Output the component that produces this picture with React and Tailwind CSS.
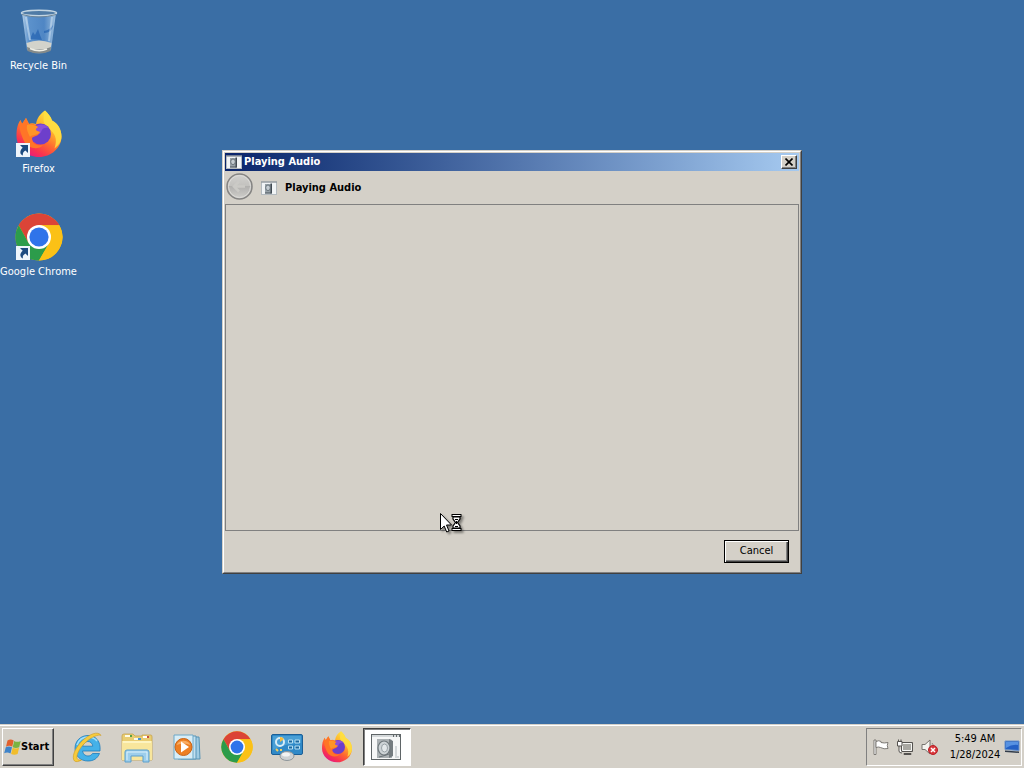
import React from 'react';

function ShortcutArrow() {
  return (
    <g>
      <rect x="1" y="33" width="14" height="14" fill="#eef4fb" />
      <path d="M5 35h8v8l-2.600-2.600c-2.200 1.400-3 3-2.400 5.200C4.600 44.500 4.400 40.500 7.700 37.700z" fill="#1c4a80" />
    </g>
  );
}

function RecycleBinIcon() {
  return (
    <svg viewBox="0 0 48 48" className="size-12" aria-hidden="true">
      <defs>
        <linearGradient id="bin" x1="0" x2="1">
          <stop offset="0" stopColor="#b4cfe8" />
          <stop offset=".2" stopColor="#5c92cc" />
          <stop offset=".65" stopColor="#4f86c4" />
          <stop offset="1" stopColor="#9fc1e0" />
        </linearGradient>
      </defs>
      <path d="M7 6 12 43q12 7 24 0L41 6z" fill="url(#bin)" />
      <path d="M11.500 36q12.500-5 25 0l-1 6q-12 6-23 0z" fill="#d3d3cb" />
      <path d="M12 40q12 5 24 0l-.5 4q-11.500 5-23 0z" fill="#848a8a" />
      <path d="M15 41.500q9 4 17 .5" stroke="#f0efe6" strokeWidth="1.500" fill="none" />
      <path d="m15 32 3-7 2 3 3-6 2 6 2 5zM29 24q6-1 9-6-1 8-9 8z" fill="#2462b0" opacity=".7" />
      <path d="M11 10l4 23" stroke="#e4f1fa" strokeWidth="2" opacity=".5" />
      <path d="M37 10l-3 24" stroke="#deedf8" strokeWidth="2" opacity=".45" />
      <ellipse cx="24" cy="6" rx="17.500" ry="2.800" fill="#4f7ba6" stroke="#c3d5e2" strokeWidth="1.500" />
      <path d="M7 7.500q17 5 34 0" stroke="#6d8597" strokeWidth="1" fill="none" />
    </svg>
  );
}

function FirefoxIcon({ id, className, shortcut }) {
  return (
    <svg viewBox="0 0 48 48" className={className} aria-hidden="true">
      <defs>
        <linearGradient id={id} x1=".85" y1=".05" x2=".25" y2="1">
          <stop offset="0" stopColor="#fff04a" />
          <stop offset=".33" stopColor="#ffb52a" />
          <stop offset=".58" stopColor="#ff6a30" />
          <stop offset=".8" stopColor="#f9344f" />
          <stop offset="1" stopColor="#e31587" />
        </linearGradient>
      </defs>
      <path d="M30 .5c3 3 6 6 7 10 6 3 9.500 9 9.500 16C46.500 38 36 47 24 47S1.500 38 1.500 26c0-7 1-12 4-16l1.500 4 4-6 3 6c2-1 4-1 7 0 1-6 4-10 9-13.500z" fill={`url(#${id})`} />
      <path d="M30 .5c3 3 6 6 7 10 6 3 9.500 9 9.500 16 0 5-3 9-7 12 2-6 2-11-1-15-3-5-10-7-10-14 0-3 .5-6 1.500-9z" fill="#ffdf42" opacity=".85" />
      <circle cx="25.500" cy="24" r="10.500" fill="#6d3fcb" />
      <path d="M16 20c4-6 13-8 18-2-4-1-7 0-8 4-2 4-7 2-10 3z" fill="#8c50d9" />
      <path d="M5.500 10l1.500 4 4-6 3 6c3-1 6 0 9 3-2 1-3 3-1 4l3 1c-1 4-6 4-8 6 0 6 5 8 11 7-5 6-16 3-19-4-3-7-6-14-3.500-21z" fill="#ff7527" />
      <path d="M12 15c4-1 8 0 11 2-2 1-3 3-1 4l3 1c-3 4-8 2-10 5-2-4-4-8-3-12z" fill="#ffa227" opacity=".7" />
      {shortcut && <ShortcutArrow />}
    </svg>
  );
}

function ChromeIcon({ className, shortcut }) {
  return (
    <svg viewBox="0 0 48 48" className={className} aria-hidden="true">
      <circle cx="24" cy="24" r="23.500" fill="#fbc116" />
      <path d="M24 24 13.600 30 3.700 12.200A23.500 23.500 0 0 1 44.300 12.200L24 12.300z" fill="#db4437" />
      <path d="M3.700 12.200A23.500 23.500 0 0 0 24 47.500L34.200 30 24 24l-10.400 6z" fill="#2c9c4b" />
      <path d="M44.300 12.200A23.500 23.500 0 0 1 24 47.500L34.200 30 24 12.200z" fill="#fbc116" />
      <circle cx="24" cy="24" r="12" fill="#fff" />
      <circle cx="24" cy="24" r="9.600" fill="#2f74ea" />
      {shortcut && <ShortcutArrow />}
    </svg>
  );
}

function AudioIcon({ className }) {
  return (
    <svg viewBox="0 0 30 26" className={className} aria-hidden="true">
      <rect x=".5" y=".5" width="29" height="25" fill="#f6f7f7" stroke="#5f6567" />
      <path d="M1 2h28" stroke="#d4d8da" strokeWidth="2" />
      <path d="M22 2h1M25 2h1M28 2h1" stroke="#41474a" strokeWidth="1.500" />
      <path d="M6 5h13l2 1v18H6z" fill="#aab0b3" />
      <path d="M18 5l4 2v15l-4 2z" fill="#757c80" />
      <ellipse cx="13" cy="14" rx="6" ry="7" fill="#cdd3d6" stroke="#6f787c" strokeWidth="1.200" />
      <ellipse cx="13.500" cy="14" rx="3" ry="4" fill="#e3e8ea" stroke="#9aa3a8" />
      <path d="M8 23q5-1 10-3" stroke="#687176" fill="none" />
      <path d="M25 12v11h3" stroke="#d4d8da" strokeWidth="2" fill="none" />
    </svg>
  );
}

function SmallAudioIcon() {
  return (
    <svg viewBox="0 0 16 14" className="h-[14px] w-4" aria-hidden="true">
      <rect x=".5" y="1" width="15" height="12.500" fill="#f1f4f6" stroke="#b3babf" />
      <path d="M0 1h16" stroke="#878e94" />
      <path d="M4 3h6.500v9.500H4z" fill="#98a2a9" />
      <path d="M9.500 2.500H11v10H9.500z" fill="#414a53" />
      <ellipse cx="7" cy="6.800" rx="2.300" ry="2.800" fill="#c4ccd2" stroke="#58636b" strokeWidth=".8" />
      <path d="M4 12h6.500" stroke="#4a555d" />
    </svg>
  );
}

function WindowsFlag() {
  return (
    <svg viewBox="0 0 17 16" className="h-4 w-[17px]" aria-hidden="true">
      <path d="M3.500 1.500q3-2 6.200 0L8.200 7.700Q5.500 6 2 7.700z" fill="#e2602d" />
      <path d="M10.200 2q3 1.700 6.500 0L15.200 8.200q-3.200 1.500-6.500 0z" fill="#7bb342" />
      <path d="M1.800 8.300q3.200-1.700 6.200 0L6.500 14.500Q3.300 12.800.2 14.300z" fill="#3f83c9" />
      <path d="M8.600 8.800q3.200 1.500 6.500 0l-1.500 6.200q-3.200 1.500-6.500 0z" fill="#f1bd2c" />
    </svg>
  );
}

function ExplorerEIcon() {
  return (
    <svg viewBox="0 0 32 32" className="size-8" aria-hidden="true">
      <path d="M29 20H11.500c.5 3.500 3 5 5.500 5 2.200 0 3.500-1 4.500-2.500h7C26.500 27.500 22.500 30 17 30 9.500 30 4 25 4 17.500S9.500 4.500 17 4.500c8 0 13 6 12 15.500zM11.600 15.200h10.200c-.4-3.200-2.500-4.700-5-4.700s-4.600 1.500-5.200 4.700z" fill="#45b1e8" stroke="#1d7cbd" strokeWidth=".8" />
      <path d="M6 14C8 8.500 12 6 17 6c4 0 7 1.500 9 4" stroke="#a3e0fa" strokeWidth="1.500" fill="none" />
      <path d="M30 4.500C27.500-.5 18 3 11 10 3 18 .5 27 3.500 30c1.500 1.300 4.500.5 7-1-3 .5-5-.5-4.500-4 .6-4 4-9.500 8.500-13.500 6-5.500 13-8.500 15.500-7z" fill="#f7cb3c" stroke="#cf9a1f" strokeWidth=".6" />
    </svg>
  );
}

function FolderIcon() {
  return (
    <svg viewBox="0 0 32 32" className="size-8" aria-hidden="true">
      <path d="M1 5q0-2 2-2h9l2 2h7V4h9q1 0 1 2v23H1z" fill="#e9cd72" stroke="#c7a34c" strokeWidth=".8" />
      <path d="M4 4h7v2H4z" fill="#fffce6" />
      <path d="M9 4h2v2H9z" fill="#56a246" />
      <path d="M13 7h7v2h-7z" fill="#f8f8ec" />
      <path d="M17 7h3v2h-3z" fill="#4a95d2" />
      <path d="M22 5h6v2h-6z" fill="#fff" />
      <path d="M26 5h2v2h-2z" fill="#c94c3d" />
      <path d="M1 10h30v19H1z" fill="#f8e69c" />
      <path d="M2 11h28" stroke="#fff8ce" strokeWidth="1.500" />
      <path d="M4 31V21q0-2 2-2h20q2 0 2 2v10h-6v-6H10v6z" fill="#9dceeb" stroke="#5b9fcc" />
      <path d="M6 29v-8h20v8" stroke="#dcf2fc" fill="none" />
    </svg>
  );
}

function MediaPlayerIcon() {
  return (
    <svg viewBox="0 0 28 28" className="size-7" aria-hidden="true">
      <path d="M8 4h18l1 22H8z" fill="#9fcbe2" stroke="#5693b5" />
      <path d="M5 3h18v23H5z" fill="#c3e0ef" stroke="#5996b8" />
      <path d="M1 2h19v24H1z" fill="#d8edf6" stroke="#6ca8c8" />
      <circle cx="10.500" cy="14" r="8.500" fill="#ed7f22" stroke="#c96316" />
      <path d="M3.500 12a8 8 0 0 1 14 0q-7-3-14 0z" fill="#f8ad64" />
      <path d="M8 8.500v11l8-5.500z" fill="#fff" />
    </svg>
  );
}

function ControlPanelIcon() {
  return (
    <svg viewBox="0 0 32 28" className="h-7 w-8" aria-hidden="true">
      <rect x=".5" y="1.500" width="31" height="20" rx="1.500" fill="#3089c7" stroke="#1a5f97" />
      <path d="M2 3h28v7Q15 10 2 17z" fill="#58aadd" opacity=".65" />
      <circle cx="9" cy="9" r="4" fill="none" stroke="#d7edf7" strokeWidth="2" />
      <path d="M9 9V4a5 5 0 0 1 4 2z" fill="#f6bd3b" />
      <path d="M17.500 7h4v3h-4zM24 7h4.500v3H24zM17.500 13h4v3h-4zM24 13h4.500v3H24z" fill="#1d689f" stroke="#b5def2" />
      <path d="M5 16l2 2M10 16v2" stroke="#f6cf5c" strokeWidth="2" />
      <ellipse cx="16" cy="23" rx="7" ry="4.500" fill="#cdd1d3" stroke="#8e969a" />
      <ellipse cx="15" cy="21.500" rx="4" ry="2" fill="#f2f3f3" />
    </svg>
  );
}

const taskbarApps = [
  { name: 'Internet Explorer', icon: <ExplorerEIcon /> },
  { name: 'Windows Explorer', icon: <FolderIcon /> },
  { name: 'Windows Media Player', icon: <MediaPlayerIcon /> },
  { name: 'Google Chrome', icon: <ChromeIcon className="size-8" /> },
  { name: 'Control Panel', icon: <ControlPanelIcon /> },
  { name: 'Firefox', icon: <FirefoxIcon id="foxTask" className="size-8" /> },
];

const desktopItems = [
  { name: 'Recycle Bin', icon: <RecycleBinIcon /> },
  { name: 'Firefox', icon: <FirefoxIcon id="foxDesk" className="size-12" shortcut /> },
  { name: 'Google Chrome', icon: <ChromeIcon className="size-12" shortcut /> },
];

function BusyCursor() {
  return (
    <svg viewBox="0 0 26 24" className="pointer-events-none absolute top-[361px] left-4/11 h-6 w-[26px] drop-shadow-[2px_2px_1px_rgba(0,0,0,0.4)] sm:left-[216px]" aria-hidden="true">
      <path d="M1.500 1.500v16l3.700-3.500 2.500 6 2.300-1-2.500-6h5z" fill="#fff" stroke="#000" />
      <path d="M12.500 3.500h10M12.500 17.500h10" stroke="#000" strokeWidth="3" />
      <path d="M13.500 3.500h8M13.500 17.500h8" stroke="#fff" strokeWidth="1" />
      <path d="M14 5v2l2.500 3.500L14 14v2h7v-2l-2.500-3.500L21 7V5z" fill="#fff" stroke="#000" strokeWidth="1.200" />
      <path d="M16 7.500h3M17.500 9v3M16 14.500h3" stroke="#000" />
    </svg>
  );
}

function AudioDialog() {
  return (
    <section
      aria-label="Playing Audio"
      className="relative flex h-106 w-full max-w-145 flex-col border border-t-[#d4d0c8] border-r-[#404040] border-b-[#404040] border-l-[#d4d0c8] bg-[#d4d0c8]"
    >
      <div className="flex flex-1 flex-col border border-t-white border-r-[#808080] border-b-[#808080] border-l-white p-px">
        <header className="flex h-[18px] items-center gap-0.5 bg-linear-to-r from-[#0a246a] to-[#a6caf0] pr-0.5 pl-px">
          <SmallAudioIcon />
          <h1 className="flex-1 text-[11px] leading-4 font-bold text-white">Playing Audio</h1>
          <button
            type="button"
            aria-label="Close"
            className="flex h-[14px] w-4 items-center justify-center border border-t-white border-r-[#404040] border-b-[#404040] border-l-white bg-[#d4d0c8] shadow-[inset_-1px_-1px_0_#808080]"
          >
            <svg viewBox="0 0 8 8" className="size-2" aria-hidden="true">
              <path d="m.5.500 7 7m0-7-7 7" stroke="#000" strokeWidth="1.600" />
            </svg>
          </button>
        </header>
        <div className="flex h-[33px] items-center gap-2 pl-px">
          <button type="button" disabled aria-label="Back" className="mb-0.5">
            <svg viewBox="0 0 27 27" className="size-[27px]" aria-hidden="true">
              <defs>
                <linearGradient id="backFill" x1="0" y1="0" x2="0" y2="1">
                  <stop offset="0" stopColor="#d3d2cf" />
                  <stop offset=".48" stopColor="#c2c1be" />
                  <stop offset=".5" stopColor="#b2b1af" />
                  <stop offset="1" stopColor="#d0cfcc" />
                </linearGradient>
              </defs>
              <circle cx="13.500" cy="13.500" r="12.500" fill="url(#backFill)" stroke="#858483" strokeWidth="1.500" />
              <circle cx="13.500" cy="13.500" r="11" fill="none" stroke="#dddcd9" />
              <path d="M19 13.500H8M13 8.500l-5 5 5 5" fill="none" stroke="#cbcac6" strokeWidth="2.500" />
            </svg>
          </button>
          <SmallAudioIcon />
          <h2 className="text-[11px] leading-4 font-bold text-black">Playing Audio</h2>
        </div>
        <div className="flex-1 border border-[#808080]" />
        <footer className="flex h-10 items-center justify-end pr-2.5">
          <button
            type="button"
            className="h-[23px] w-[65px] border border-black bg-[#d4d0c8] text-[11px] leading-4 text-black shadow-[inset_1px_1px_0_#fff,inset_-1px_-1px_0_#404040,inset_-2px_-2px_0_#808080]"
          >
            Cancel
          </button>
        </footer>
      </div>
      <BusyCursor />
    </section>
  );
}

function Tray() {
  return (
    <div className="flex h-[38px] items-center border border-t-[#808080] border-r-white border-b-white border-l-[#808080] pr-px pl-1.5">
      <div className="flex items-center gap-2">
        <svg viewBox="0 0 16 16" className="size-4" aria-label="Action Center" role="img">
          <path d="M1 1v14.500h2V1z" fill="#fff" stroke="#65625e" strokeWidth=".8" />
          <path d="M3 2.500q3-1.500 5 0v1q3 1 7 0-1.500 3 0 6-4 1-7.500-1-2-1-4.500 0z" fill="#fff" stroke="#65625e" strokeWidth=".8" />
        </svg>
        <svg viewBox="0 0 16 16" className="size-4" aria-label="Network" role="img">
          <path d="M4.500 3.500h11v9h-11z" fill="#a9a8a2" stroke="#54524f" />
          <path d="M5.500 4.500h9v7h-9z" fill="none" stroke="#f7f7f4" />
          <path d="M7 14.500h7v1H7z" fill="#fff" stroke="#54524f" />
          <path d="M.500 2.500v4.500h4.500V2.500zM1.500.500v2M4 .500v2M2 7v5q0 2 3 2" fill="#fff" stroke="#54524f" />
        </svg>
        <svg viewBox="0 0 17 16" className="h-4 w-[17px]" aria-label="Volume unavailable" role="img">
          <path d="M1 5.500h3l5-4.500v14l-5-4.500H1z" fill="#f4f3ef" stroke="#77746f" />
          <path d="M11 4q2 2 2 5" stroke="#918e89" fill="none" />
          <circle cx="12" cy="11" r="4.500" fill="#d9383c" stroke="#b71f27" />
          <path d="m10 9 4 4m0-4-4 4" stroke="#fff" strokeWidth="1.500" />
        </svg>
      </div>
      <time dateTime="2024-01-28T05:49" className="ml-2 w-[58px] text-center text-[11px] leading-4 text-black">
        5:49 AM
        <br />
        1/28/2024
      </time>
      <button type="button" aria-label="Show desktop" className="flex w-4 justify-center">
        <svg viewBox="0 0 16 14" className="h-[14px] w-4" aria-hidden="true">
          <path d="M1 1h14v9.500L1 9.500z" fill="#2360c5" stroke="#6b93c9" />
          <path d="M2 2h12v3Q8 4 2 8z" fill="#5792e2" />
          <path d="M1 10.500l14 1V13L1 12z" fill="#303b4a" />
        </svg>
      </button>
    </div>
  );
}

export default function App() {
  return (
    <div className="flex min-h-screen flex-col bg-[#3a6ea5] font-['Tahoma','DejaVu_Sans_Condensed','DejaVu_Sans',sans-serif]">
      <main className="grid flex-1">
        <nav aria-label="Desktop" className="col-start-1 row-start-1 flex flex-col items-start gap-9 pt-[7px]">
          {desktopItems.map((item) => (
            <a key={item.name} href="#" className="flex w-[77px] flex-col items-center gap-[3px] text-[11px] leading-4 whitespace-nowrap text-white">
              {item.icon}
              <span>{item.name}</span>
            </a>
          ))}
        </nav>
        <div className="col-start-1 row-start-1 flex w-full max-w-145 self-center justify-self-center">
          <AudioDialog />
        </div>
      </main>
      <footer className="flex h-11 items-center border-t border-[#d4d0c8] bg-[#d4d0c8] px-0.5 shadow-[inset_0_1px_0_#fff]">
        <button
          type="button"
          className="mt-px flex h-[38px] w-[52px] items-center justify-start border border-t-white border-r-[#404040] border-b-[#404040] border-l-white pl-px text-[11px] leading-4 font-bold text-black shadow-[inset_-1px_-1px_0_#808080]"
        >
          <WindowsFlag />
          Start
        </button>
        <nav aria-label="Taskbar" className="mt-px ml-[9px] flex flex-1 items-center gap-0.5">
          {taskbarApps.map((app) => (
            <button key={app.name} type="button" aria-label={app.name} className="flex h-[38px] w-12 items-center justify-center">
              {app.icon}
            </button>
          ))}
          <button
            type="button"
            aria-label="Playing Audio"
            className="flex h-[38px] w-12 items-center justify-center border border-t-[#404040] border-r-white border-b-white border-l-[#404040] bg-white pr-0.5 shadow-[inset_1px_1px_0_#808080]"
          >
            <AudioIcon className="h-[26px] w-[30px]" />
          </button>
        </nav>
        <div className="mt-px">
          <Tray />
        </div>
      </footer>
    </div>
  );
}
